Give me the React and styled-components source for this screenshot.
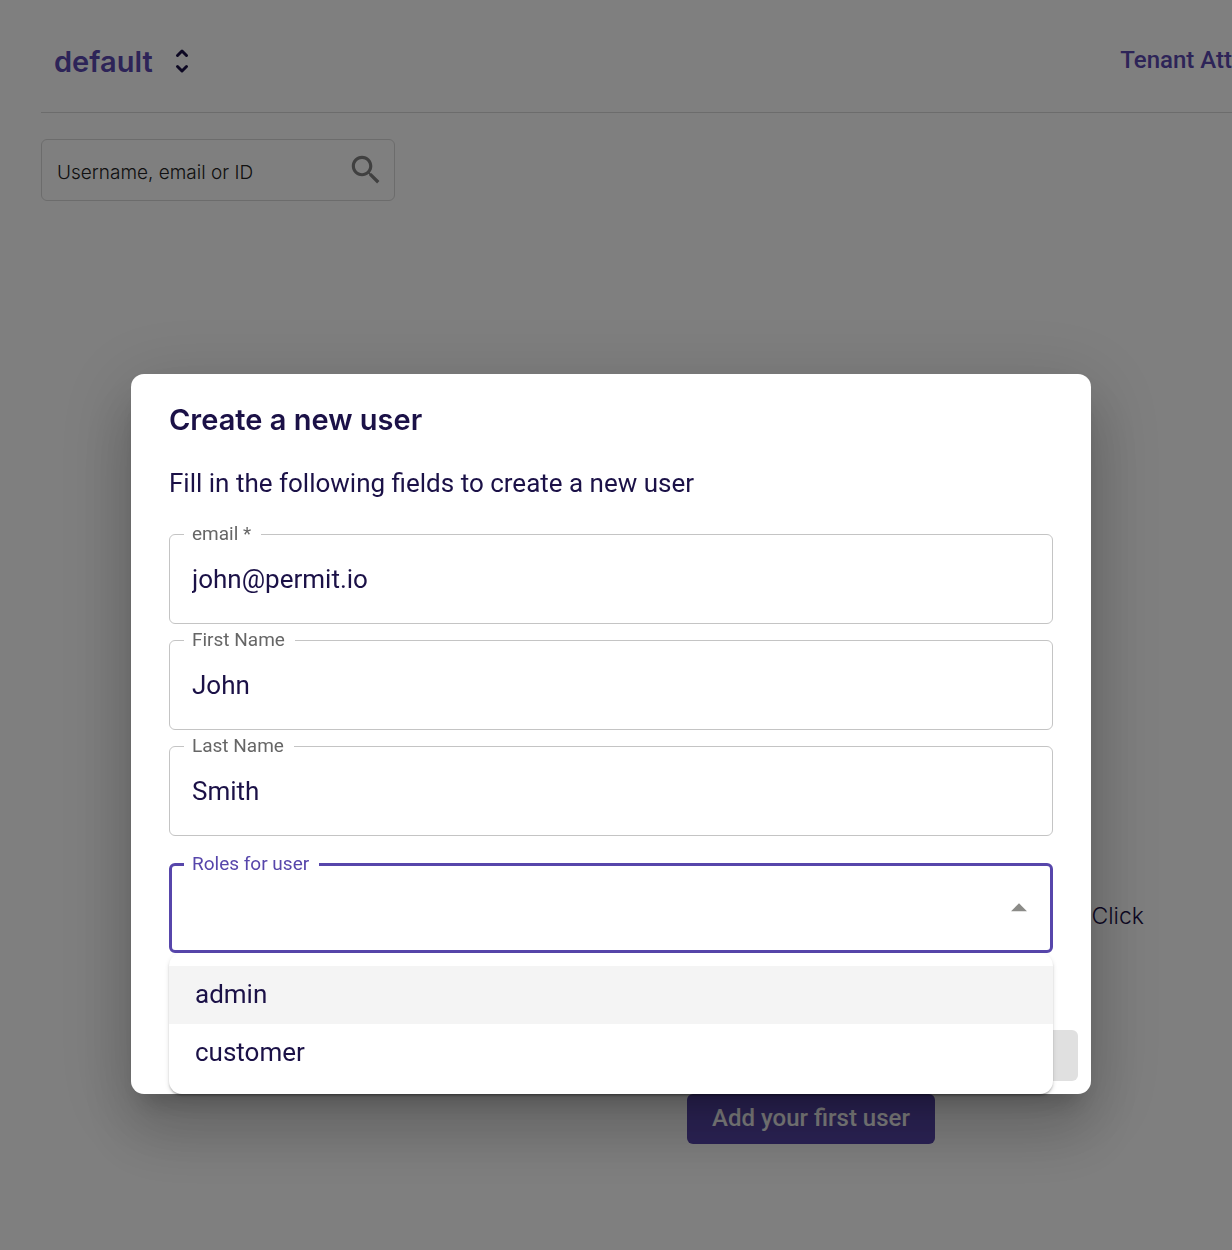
import { useState } from "react";
import styled, { createGlobalStyle } from "styled-components";

const roles = ["admin", "customer"];

const TextField = ({ id, label, value, onChange, type = "text" }) => (
    <Outline>
        <Legend>
            <label htmlFor={id}>{label}</label>
        </Legend>
        <FieldInput id={id} type={type} value={value} onChange={onChange} />
    </Outline>
);

const RoleSelect = ({ value, onChange }) => {
    const [open, setOpen] = useState(true);

    const handlePick = (role) => {
        onChange(role);
        setOpen(false);
    };

    return (
        <SelectWrapper>
            <Outline $active>
                <Legend $active>
                    <label htmlFor="roles">Roles for user</label>
                </Legend>
                <SelectRow>
                    <FieldInput
                        id="roles"
                        role="combobox"
                        aria-expanded={open}
                        aria-controls="role-options"
                        $active
                        readOnly
                        value={value}
                        onClick={() => setOpen(!open)}
                    />
                    <ArrowButton type="button" aria-label="Toggle roles" onClick={() => setOpen(!open)}>
                        <ArrowIcon viewBox="0 0 24 24" $open={open}>
                            <path d="M7 10l5 5 5-5z" />
                        </ArrowIcon>
                    </ArrowButton>
                </SelectRow>
            </Outline>
            {open && (
                <OptionList id="role-options" role="listbox">
                    {roles.map((role, i) => (
                        <Option
                            key={role}
                            role="option"
                            aria-selected={value === role}
                            $highlighted={i === 0}
                            onClick={() => handlePick(role)}
                        >
                            {role}
                        </Option>
                    ))}
                </OptionList>
            )}
        </SelectWrapper>
    );
};

const CreateUserDialog = () => {
    const [user, setUser] = useState({ email: "john@permit.io", first: "John", last: "Smith", role: "" });
    const update = (key) => (e) => setUser({ ...user, [key]: e.target.value });

    return (
        <Backdrop>
            <Dialog role="dialog" aria-modal="true" aria-labelledby="dialog-title">
                <DialogBody>
                    <DialogTitle id="dialog-title">Create a new user</DialogTitle>
                    <DialogText>Fill in the following fields to create a new user</DialogText>
                    <Fields>
                        <TextField id="email" label="email *" type="email" value={user.email} onChange={update("email")} />
                        <TextField id="first" label="First Name" value={user.first} onChange={update("first")} />
                        <TextField id="last" label="Last Name" value={user.last} onChange={update("last")} />
                    </Fields>
                    <RoleSelect value={user.role} onChange={(role) => setUser({ ...user, role })} />
                </DialogBody>
                <DialogActions>
                    <SubmitButton type="submit" aria-label="Create" disabled />
                </DialogActions>
            </Dialog>
        </Backdrop>
    );
};

export default function App() {
    return (
        <>
            <GlobalStyle />
            <Page>
                <Header>
                    <TenantButton type="button">
                        default
                        <UpDownIcon viewBox="0 0 14 26">
                            <path d="M2.5 7.5 7 3l4.5 4.500M2.500 18.500 7 23l4.500-4.500" />
                        </UpDownIcon>
                    </TenantButton>
                    <HeaderLink href="#attributes">Tenant Att</HeaderLink>
                </Header>
                <SearchBox>
                    <SearchInput type="search" aria-label="Search users" placeholder="Username, email or ID" />
                    <SearchIcon viewBox="0 0 24 24">
                        <path d="M15.5 14h-.79l-.28-.27C15.41 12.59 16 11.11 16 9.500 16 5.910 13.090 3 9.500 3S3 5.910 3 9.500 5.910 16 9.500 16c1.610 0 3.090-.59 4.230-1.570l.27.28v.79l5 4.990L20.490 19l-4.990-5zm-6 0C7.010 14 5 11.990 5 9.500S7.010 5 9.500 5 14 7.010 14 9.500 11.990 14 9.500 14z" />
                    </SearchIcon>
                </SearchBox>
                <EmptyState>
                    <EmptyText>Click</EmptyText>
                    <AddButton type="button">Add your first user</AddButton>
                </EmptyState>
            </Page>
            <CreateUserDialog />
        </>
    );
}

// Styled Components
const GlobalStyle = createGlobalStyle`
    * {
        box-sizing: border-box;
    }
    body {
        margin: 0;
        background: #fff;
        color: #1b1147;
        font-family: Roboto, sans-serif;
    }
    button, input {
        font-family: inherit;
    }
`

const Page = styled.main`
    min-height: 100vh;
    padding-left: 41px;
    display: flex;
    flex-direction: column;
    overflow: hidden;
`

const Header = styled.header`
    display: flex;
    align-items: center;
    justify-content: space-between;
    height: 113px;
    padding: 8px 0 0 13px;
    border-bottom: 1px solid #d8d8d8;
`

const TenantButton = styled.button`
    display: flex;
    align-items: center;
    gap: 22px;
    padding: 2px 0 0;
    border: 0;
    background: none;
    color: #5b48b0;
    font-family: Inter, sans-serif;
    font-size: 29px;
    font-weight: 600;
`

const UpDownIcon = styled.svg`
    width: 14px;
    height: 26px;
    fill: none;
    stroke: #1b1147;
    stroke-width: 3;
    stroke-linecap: round;
    stroke-linejoin: round;
`

const HeaderLink = styled.a`
    color: #5b48b0;
    font-size: 24px;
    font-weight: 500;
    text-decoration: none;
    white-space: nowrap;
`

const SearchBox = styled.div`
    display: flex;
    align-items: center;
    width: 354px;
    height: 62px;
    margin-top: 26px;
    padding: 0 9px 0 15px;
    border: 1px solid #d8d8d8;
    border-radius: 6px;
`

const SearchInput = styled.input`
    flex: 1;
    min-width: 0;
    padding: 5px 0 0;
    border: 0;
    outline: 0;
    background: none;
    font-family: Inter, sans-serif;
    font-size: 19px;
    font-weight: 300;

    &::placeholder {
        color: #222;
        opacity: 1;
    }
`

const SearchIcon = styled.svg`
    width: 38px;
    height: 38px;
    fill: #808080;
`

const EmptyState = styled.section`
    display: flex;
    flex-direction: column;
    align-items: center;
    gap: 162px;
    padding: 699px 0 0 349px;
`

const EmptyText = styled.p`
    align-self: flex-end;
    margin: 0;
    padding-right: 88px;
    font-family: Inter, sans-serif;
    font-size: 23px;
    font-weight: 300;
    line-height: 32px;
`

const AddButton = styled.button`
    height: 50px;
    padding: 0 25px 2px;
    border: 0;
    border-radius: 6px;
    background: #5746ab;
    color: #fff;
    font-size: 24px;
    font-weight: 500;
`

const Backdrop = styled.div`
    position: fixed;
    inset: 0;
    display: flex;
    justify-content: center;
    align-items: flex-start;
    padding: 374px 42px 0 32px;
    background: rgba(0, 0, 0, 0.5);
`

const Dialog = styled.form`
    width: 100%;
    max-width: 960px;
    border-radius: 13px;
    background: #fff;
    box-shadow: 0 18px 24px -11px rgba(0, 0, 0, 0.2), 0 38px 61px 5px rgba(0, 0, 0, 0.14),
        0 14px 74px 13px rgba(0, 0, 0, 0.12);
`

const DialogBody = styled.div`
    padding: 26px 38px 0;
`

const DialogTitle = styled.h2`
    margin: 0 0 24px;
    font-family: Inter, sans-serif;
    font-size: 29px;
    font-weight: 600;
    line-height: 40px;
`

const DialogText = styled.p`
    margin: 0 0 22px;
    font-size: 26px;
    line-height: 38px;
`

const Fields = styled.div`
    display: flex;
    flex-direction: column;
    gap: 6px;
    margin-bottom: 18px;
`

const Outline = styled.fieldset`
    min-width: 0;
    margin: 0;
    padding: 0 0 9px;
    border: ${(props) => (props.$active ? "3px solid #5746ab" : "1px solid #c4c4c4")};
    border-radius: 6px;
`

const Legend = styled.legend`
    height: 21px;
    margin-left: ${(props) => (props.$active ? "12px" : "14px")};
    padding: 0 10px 0 8px;
    color: ${(props) => (props.$active ? "#5746ab" : "#666")};
    font-size: 19px;
    line-height: 19px;
`

const FieldInput = styled.input`
    display: block;
    width: 100%;
    height: ${(props) => (props.$active ? "66px" : "69px")};
    padding: 0 22px 2px;
    border: 0;
    outline: 0;
    background: none;
    color: #1b1147;
    font-size: 26px;
`

const SelectWrapper = styled.div`
    position: relative;
`

const SelectRow = styled.div`
    display: flex;
    align-items: center;
    padding-right: 12px;
`

const ArrowButton = styled.button`
    flex: none;
    height: 38px;
    padding: 0;
    border: 0;
    background: none;
`

const ArrowIcon = styled.svg`
    display: block;
    width: 38px;
    height: 38px;
    fill: #8b8b88;
    transform: ${(props) => (props.$open ? "rotate(180deg)" : "none")};
`

const OptionList = styled.ul`
    position: absolute;
    top: 100%;
    left: 0;
    right: 0;
    z-index: 1;
    margin: 0;
    padding: 13px 0 12px;
    border-radius: 13px;
    background: #fff;
    box-shadow: 0 3px 2px -2px rgba(0, 0, 0, 0.2), 0 2px 2px 0 rgba(0, 0, 0, 0.14), 0 2px 5px 0 rgba(0, 0, 0, 0.12);
    list-style: none;
`

const Option = styled.li`
    padding: 0 26px 2px;
    background: ${(props) => (props.$highlighted ? "#f4f4f4" : "none")};
    font-size: 26px;
    line-height: 56px;
    cursor: pointer;
`

const DialogActions = styled.div`
    display: flex;
    justify-content: flex-end;
    margin-top: 77px;
    padding: 0 13px 13px;
`

const SubmitButton = styled.button`
    width: 120px;
    height: 51px;
    border: 0;
    border-radius: 6px;
    background: #e0e0e0;
`
